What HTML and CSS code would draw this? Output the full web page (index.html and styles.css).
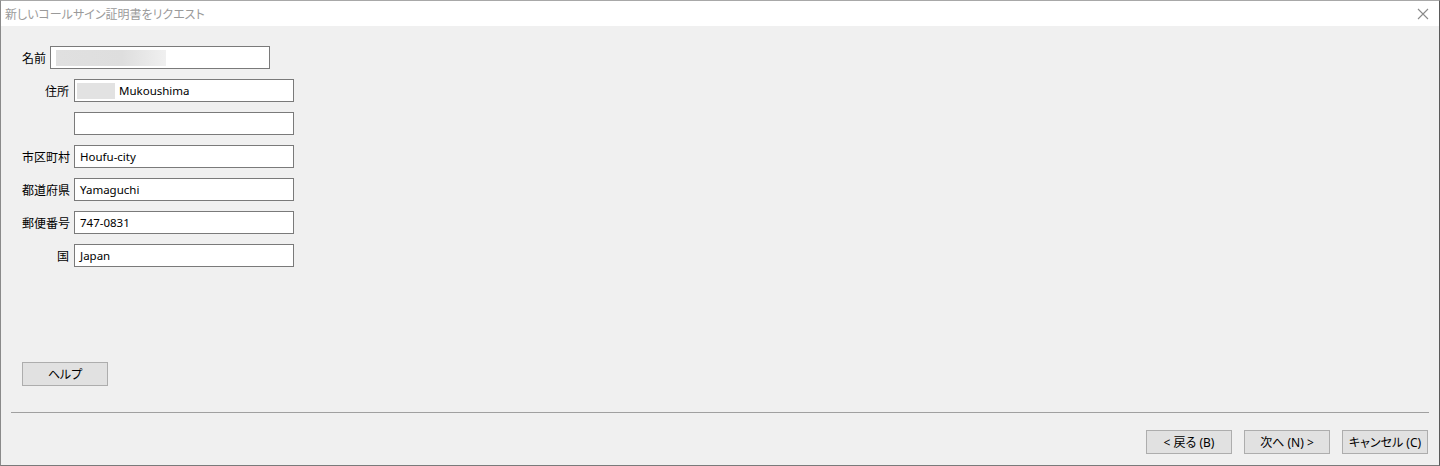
FILE: index.html
```html
<!DOCTYPE html>
<html lang="ja">
<head>
<meta charset="utf-8">
<title>新しいコールサイン証明書をリクエスト</title>
<link rel="stylesheet" href="styles.css">
</head>
<body>
<div class="window">
  <div class="titlebar">
    <span class="title">新しいコールサイン証明書をリクエスト</span>
    <svg class="close" width="12" height="12" viewBox="0 0 12 12"><path d="M1 1 L11 11 M11 1 L1 11" stroke="#8a8a8a" stroke-width="1.1" fill="none"/></svg>
  </div>
  <div class="content">
    <div class="row-name">
      <label class="lbl-name">名前</label>
      <div class="field"><span class="blur blur-name"></span></div>
    </div>
    <div class="form">
      <div class="row"><label class="lbl">住所</label><div class="field"><span class="blur blur-addr"></span><span class="val">Mukoushima</span></div></div>
      <div class="row"><label class="lbl"></label><div class="field"></div></div>
      <div class="row"><label class="lbl">市区町村</label><div class="field"><span class="val">Houfu-city</span></div></div>
      <div class="row"><label class="lbl">都道府県</label><div class="field"><span class="val">Yamaguchi</span></div></div>
      <div class="row"><label class="lbl">郵便番号</label><div class="field"><span class="val">747-0831</span></div></div>
      <div class="row"><label class="lbl">国</label><div class="field"><span class="val">Japan</span></div></div>
    </div>
    <button class="btn help">ヘルプ</button>
    <div class="sep"></div>
    <div class="actions">
      <button class="btn">&lt; 戻る (B)</button>
      <button class="btn">次へ (N) &gt;</button>
      <button class="btn">キャンセル (C)</button>
    </div>
  </div>
</div>
</body>
</html>
```
FILE: styles.css
```css
html, body {
  margin: 0;
  padding: 0;
  background: #f0f0f0;
}
body {
  font-family: "Noto Sans", "Noto Sans CJK JP", sans-serif;
  font-size: 12px;
  font-feature-settings: "palt";
  color: #000;
}
.window {
  width: 1440px;
  height: 466px;
  box-sizing: border-box;
  border-top: 1px solid #a8a8a8;
  border-left: 1px solid #8a8a8a;
  border-right: 1px solid #5a5a5a;
  border-bottom: 1px solid #7a7a7a;
  display: flex;
  flex-direction: column;
  background: #f0f0f0;
}
.titlebar {
  height: 25px;
  background: #fff;
  display: flex;
  align-items: center;
  justify-content: space-between;
  padding: 0 10px 0 4px;
  flex: none;
}
.title {
  color: #9a9a9a;
  font-family: "Noto Sans CJK JP", sans-serif;
  font-size: 12px;
  line-height: 25px;
}
.close {
  display: block;
}
.content {
  flex: 1;
  display: flex;
  flex-direction: column;
  padding: 20px 0 0 21px;
}
.row-name {
  display: flex;
  align-items: center;
  gap: 5px;
  height: 23px;
}
.lbl-name {
  width: 23px;
  white-space: nowrap;
  font-family: "Noto Sans CJK JP", sans-serif;
}
.form {
  display: flex;
  flex-direction: column;
  gap: 10px;
  margin-top: 10px;
}
.row {
  display: flex;
  align-items: center;
  gap: 5px;
  height: 23px;
}
.lbl {
  width: 47px;
  text-align: right;
  white-space: nowrap;
  font-family: "Noto Sans CJK JP", sans-serif;
}
.field {
  width: 220px;
  height: 23px;
  box-sizing: border-box;
  border: 1px solid #7a7a7a;
  background: #fff;
  display: flex;
  align-items: center;
  padding-left: 5px;
  gap: 4px;
}
.blur {
  display: block;
  height: 16px;
}
.blur-name {
  width: 110px;
  background: linear-gradient(90deg, #e0e0e0 0%, #dedede 60%, #f0f0f0 100%);
}
.blur-addr {
  width: 38px;
  margin-left: -3px;
  background: #e2e2e2;
}
.val {
  line-height: 16px;
  font-size: 11.5px;
}
.btn {
  width: 86px;
  height: 24px;
  box-sizing: border-box;
  border: 1px solid #adadad;
  background: #e1e1e1;
  font-family: "Noto Sans", "Noto Sans CJK JP", sans-serif;
  font-feature-settings: "palt";
  font-size: 12px;
  color: #000;
  padding: 0;
  margin: 0;
}
.help {
  margin-top: 95px;
  margin-left: 0;
}
.sep {
  height: 1px;
  background: #a0a0a0;
  margin: 26px 10px 0 -11px;
}
.actions {
  display: flex;
  justify-content: flex-end;
  gap: 12px;
  margin-top: 17px;
  padding-right: 11px;
}
```
